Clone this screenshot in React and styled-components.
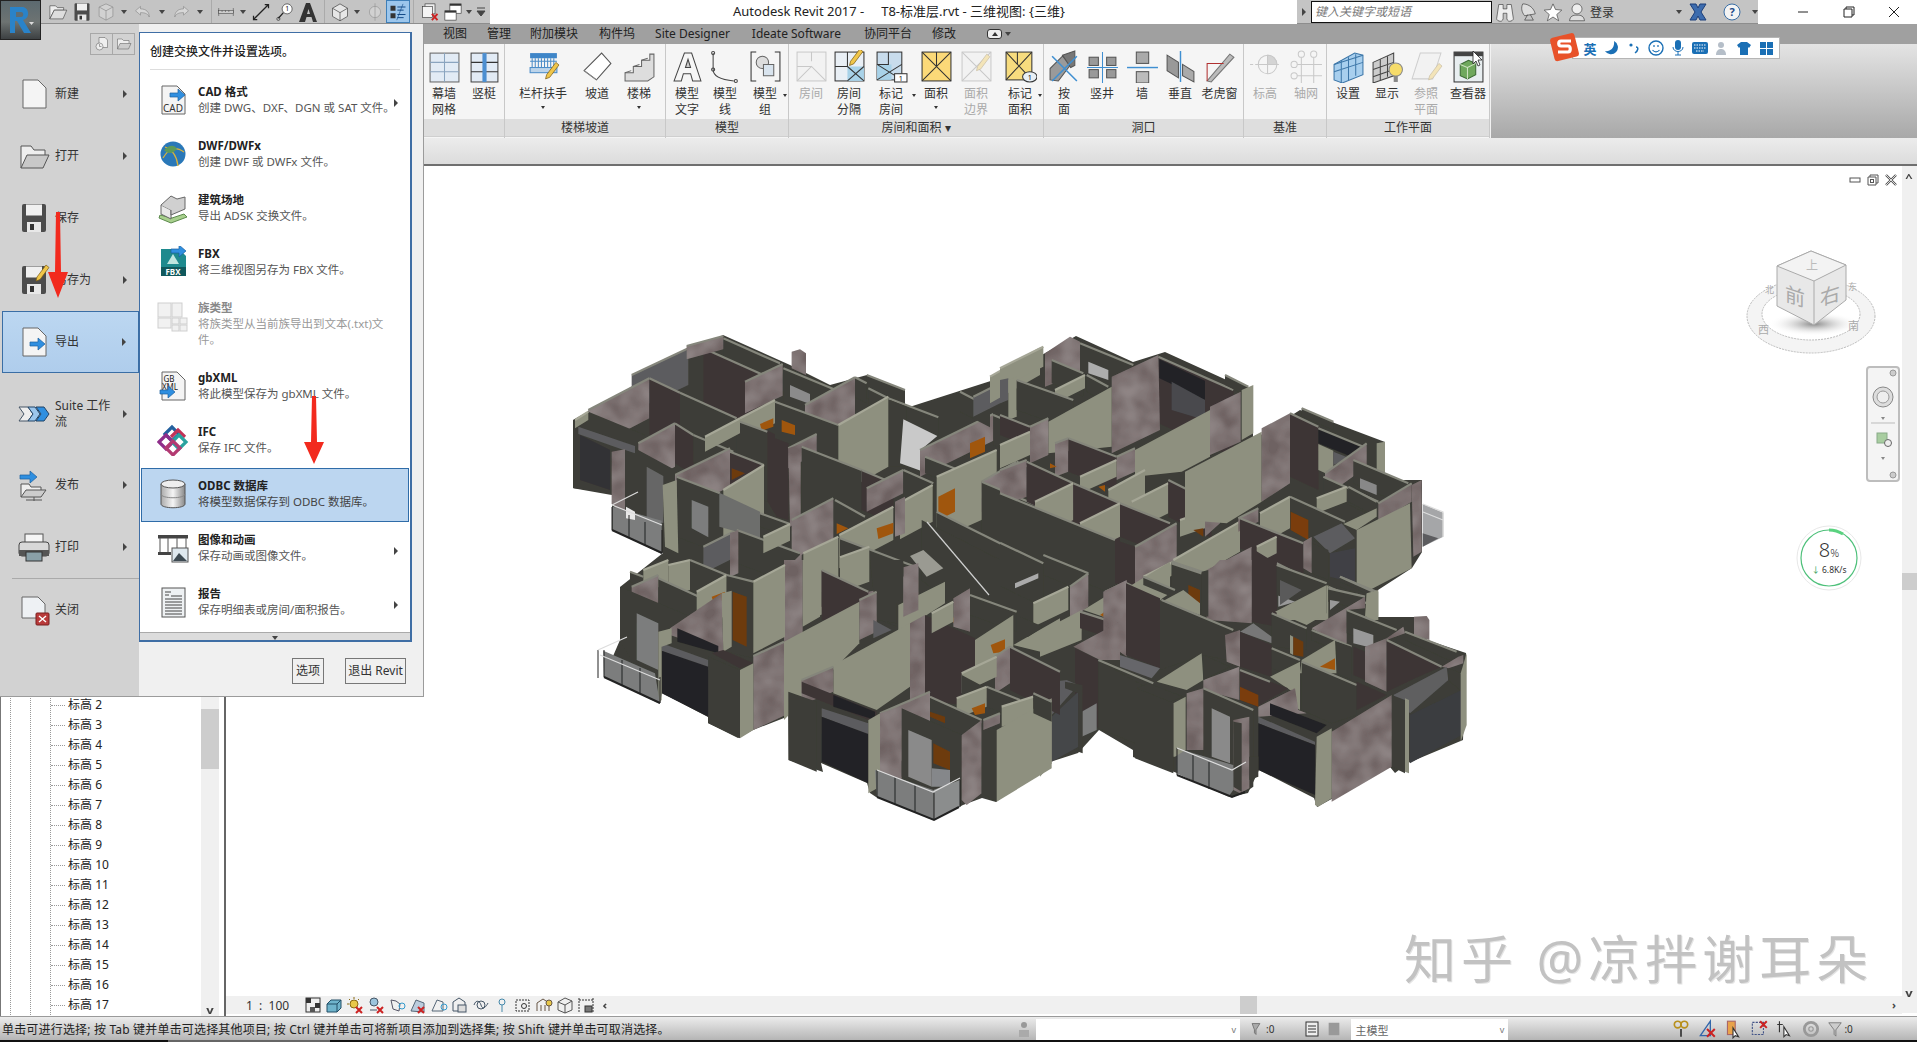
import React from 'react';
import styled, { createGlobalStyle } from 'styled-components';

const FONT = `"Noto Sans", "Noto Sans CJK SC", sans-serif`;

const Global = createGlobalStyle`
  html, body { margin: 0; padding: 0; background: #fff; }
  body { font-family: ${FONT}; font-size: 12px; color: #333; overflow: hidden; }
`;

const Page = styled.div`
  position: relative; width: 1917px; height: 1042px; overflow: hidden; background: #fff;
  display: flex; flex-direction: column;
`;
const TitleBar = styled.div`display: flex; height: 24px; flex: none; background: #fff; position: relative;`;
const RButton = styled.div`
  position: absolute; left: 0; top: 0; width: 41px; height: 40px; z-index: 30; box-sizing: border-box;
  border: 1px solid #222; background: linear-gradient(#5c6a70, #6d7372 55%, #3c4042);
  display: flex; align-items: center; justify-content: center;
`;
const Qat = styled.div`
  margin-left: 41px; width: 449px; height: 24px; background: #c4c4c4; box-sizing: border-box;
  border-bottom: 1px solid #8d8d8d; display: flex; align-items: center;
`;
const QatSlot = styled.div`
  flex: none; width: ${p => p.$w || 24}px; height: 23px; display: flex; align-items: center; justify-content: center;
  box-sizing: border-box; opacity: ${p => (p.$off ? 0.55 : 1)};
  ${p => p.$on && 'background:#9cc6ec;border:1px solid #3f7fb8;'}
`;
const QatSep = styled.div`flex: none; width: 1px; height: 23px; background: #aaa; margin: 0 ${p => p.$m ?? 5}px;`;
const TriDown = styled.span`
  flex: none; display: inline-block; width: 0; height: 0; border-left: 3px solid transparent; border-right: 3px solid transparent;
  border-top: 4px solid #444; margin: 0 ${p => p.$m ?? 3}px;
`;
const Title = styled.div`
  position: absolute; left: 733px; top: 0; height: 24px; line-height: 23px; white-space: pre; font-size: 13px; color: #222;
`;
const InfoCenter = styled.div`
  position: absolute; left: 1297px; top: 0; width: 461px; height: 24px; background: #c4c4c4; box-sizing: border-box;
  border-bottom: 1px solid #8d8d8d; display: flex; align-items: center;
`;
const PlayTri = styled.span`
  width: 0; height: 0; border-top: 4px solid transparent; border-bottom: 4px solid transparent; border-left: 4px solid #444; margin: 0 5px 0 5px;
`;
const SearchBox = styled.div`
  width: 181px; height: 22px; box-sizing: border-box; border: 1px solid #111; background: #fff; font-style: italic; color: #777;
  padding-left: 3px; line-height: 19px; flex: none; margin-right: 1px;
`;
const InfoSlot = styled.div`flex: none; width: ${p => p.$w || 24}px; display: flex; align-items: center; justify-content: center; color: #333;`;
const WinControls = styled.div`
  position: absolute; right: 0; top: 0; height: 24px; display: flex; width: 137px;
`;
const WinBtn = styled.div`flex: 1; display: flex; align-items: center; justify-content: center;`;

const Tabs = styled.div`
  height: 20px; flex: none; background: #a0a0a0; display: flex; align-items: center; padding-left: 443px; color: #222;
`;
const Tab = styled.div`margin-right: ${p => p.$mr}px; white-space: nowrap; flex: none; line-height: 20px;`;
const TabToggle = styled.div`
  width: 13px; height: 8px; border: 1px solid #333; border-radius: 3px; background: #eee; display: flex; align-items: center; justify-content: center;
`;
const TriUp = styled.span`width: 0; height: 0; border-left: 3px solid transparent; border-right: 3px solid transparent; border-bottom: 4px solid #333;`;

const Ribbon = styled.div`height: 94px; flex: none; display: flex; background: #f2f2f2;`;
const RibbonLead = styled.div`width: 424px; flex: none;`;
const RibbonFill = styled.div`flex: 1; background: linear-gradient(#e4e4e4, #a8a8a8); margin-left: 1px;`;
const Panel = styled.div`
  width: ${p => p.$w}px; flex: none; margin-right: 1px; display: flex; flex-direction: column; background: #f5f5f5;
  box-shadow: 1px 0 0 #c8c8c8;
`;
const PanelBody = styled.div`flex: 1; display: flex;`;
const PanelTitle = styled.div`
  height: 17px; flex: none; background: #dedede; text-align: center; line-height: 17px; color: #333; border-bottom: 1px solid #cfcfcf; margin-bottom: 1px;
`;
const RBtn = styled.div`
  width: ${p => p.$w}px; flex: none; position: relative; display: flex; flex-direction: column; align-items: center;
  color: ${p => (p.$off ? '#aaa' : '#333')};
`;
const RIcon = styled.div`
  height: 34px; margin: 5px 0 3px; display: flex; align-items: center; justify-content: center; opacity: ${p => (p.$off ? 0.35 : 1)};
`;
const RLabel = styled.div`line-height: 16px; font-size: 12px; white-space: nowrap; text-align: center;`;
const SideCaret = styled.span`
  position: absolute; right: 1px; top: 50px; width: 0; height: 0; border-left: 2.5px solid transparent; border-right: 2.5px solid transparent; border-top: 3px solid #333;
`;
const BelowCaret = styled.span`
  margin-top: 4px; width: 0; height: 0; border-left: 2.5px solid transparent; border-right: 2.5px solid transparent; border-top: 3px solid #333;
`;

const SubBar = styled.div`
  height: 28px; flex: none; box-sizing: border-box; background: linear-gradient(#ececec, #dcdcdc); border-bottom: 2px solid #6f6f6f;
`;

const Main = styled.div`flex: 1; display: flex; min-height: 0;`;
const Tree = styled.div`
  flex: none; box-sizing: border-box; display: flex; border-left: 1px solid #777; padding-left: 1px; padding-right: 5px;
  background: #fff; border-right: 2px solid #666; width: 226px;
`;
const TreeList = styled.div`
  flex: 1; display: flex; flex-direction: column; justify-content: flex-end; padding-bottom: 1px; overflow: hidden;
  background-image:
    repeating-linear-gradient(to bottom, #999 0 1px, transparent 1px 2px),
    repeating-linear-gradient(to bottom, #999 0 1px, transparent 1px 2px),
    repeating-linear-gradient(to bottom, #999 0 1px, transparent 1px 2px);
  background-size: 1px 100%; background-repeat: no-repeat; background-position: 8px 0, 28px 0, 48px 0;
`;
const TreeRow = styled.div`
  flex: none; height: 20px; line-height: 20px; padding-left: 66px; position: relative; color: #222; font-size: 12px;
  &::before { content: ''; position: absolute; left: 49px; width: 14px; top: 10px; border-top: 1px dotted #999; }
`;
const VScroll = styled.div`
  width: ${p => p.$w}px; flex: none; background: #f0f0f0; display: flex; flex-direction: column; align-items: center; justify-content: flex-end; position: relative;
`;
const TreeThumb = styled.div`position: absolute; left: 0; right: 0; bottom: 247px; height: 60px; background: #cdcdcd;`;
const SmallChevron = styled.div`color: #444; font-size: 10px; line-height: 12px; font-weight: 700; transform: scaleX(1.3); margin-left: ${p => p.$ml || 0}px;`;
const Canvas = styled.div`flex: 1; display: flex; min-width: 0;`;
const CanvasCol = styled.div`flex: 1; display: flex; flex-direction: column; min-width: 0;`;
const ViewArea = styled.div`flex: 1; position: relative; background: #fff;`;
const ViewBar = styled.div`
  height: 18px; margin-bottom: 2px; background: #f0f0f0; flex: none; display: flex; align-items: center; padding-left: 20px; position: relative;
`;
const ScaleText = styled.div`width: 58px; flex: none; white-space: pre; color: #333;`;
const ViewIcons = styled.div`display: flex; gap: 3px; align-items: center;`;
const HThumb = styled.div`position: absolute; left: 1014px; top: 0; width: 17px; height: 18px; background: #cdcdcd;`;
const HChevronEnd = styled.div`position: absolute; right: 6px; top: 2px; font-size: 11px; line-height: 14px; font-weight: 700; color: #444;`;
const RightScrollCol = styled.div`width: 15px; flex: none; background: #f0f0f0; position: relative; margin-bottom: 3px;`;
const RightThumb = styled.div`position: absolute; left: 0; right: 0; top: 407px; height: 17px; background: #cdcdcd;`;
const TopChevron = styled(SmallChevron)`position: absolute; top: 6px; left: 4px;`;
const BottomChevron = styled(SmallChevron)`position: absolute; bottom: 14px; left: 4px;`;

const Status = styled.div`
  height: 24px; flex: none; box-sizing: border-box; border-top: 1px solid #9a9a9a; background: linear-gradient(#ececec, #b5b5b5);
  display: flex; align-items: center; padding-left: 2px; color: #222;
`;
const Message = styled.div`width: 1013px; flex: none; white-space: nowrap; font-size: 12px; letter-spacing: .18px;`;
const StatusBox = styled.div`
  width: ${p => p.$w}px; height: 21px; flex: none; box-sizing: border-box; background: #fff; display: flex; align-items: center; justify-content: space-between;
  padding: 0 4px; color: #666; margin-top: 2px; font-size: 11px;
`;
const StatusIcons = styled.div`display: flex; align-items: center; gap: ${p => p.$g || 4}px; margin-left: ${p => p.$ml}px;`;
const VTick = styled.span`font-size: 9px; color: #777;`;
const StatusNum = styled.span`font-size: 10px; color: #333; margin-left: 1px;`;
const TaskStrip = styled.div`
  height: 2px; flex: none; background: linear-gradient(90deg, #111 0 168px, #666 168px 330px, #111 330px);
`;

/* ---------- overlays ---------- */
const Menu = styled.div`
  position: absolute; left: 0; top: 24px; width: 424px; height: 673px; z-index: 20; display: flex; box-sizing: border-box;
  background: #f0f0f0; border-right: 1px solid #9b9b9b; border-bottom: 1px solid #9b9b9b;
`;
const MenuLeft = styled.div`
  width: 139px; flex: none; background: #d2d2d2; position: relative; display: flex; flex-direction: column; padding-top: 39px;
`;
const RecentBtns = styled.div`position: absolute; top: 9px; left: 90px; display: flex;`;
const RecentBtn = styled.div`
  width: 23px; height: 22px; box-sizing: border-box; border: 1px solid #a8a8a8; margin-right: -1px; display: flex; align-items: center; justify-content: center;
`;
const MenuItem = styled.div`
  flex: none; height: ${p => p.$h || 62}px; display: flex; align-items: center; box-sizing: border-box; padding-left: 18px; position: relative; color: #333;
  ${p => p.$sel && 'background:linear-gradient(#bcd7f1,#afcdec);border:1px solid #3a6ea5;margin-left:2px;padding-left:15px;'}
`;
const MenuIcon = styled.div`width: 37px; flex: none; display: flex;`;
const MenuLabel = styled.div`width: 60px; line-height: 16px; font-size: 12px;`;
const MenuArrow = styled.span`
  position: absolute; left: ${p => p.$l ?? 123}px; top: 50%; margin-top: -4px; width: 0; height: 0;
  border-top: 4px solid transparent; border-bottom: 4px solid transparent; border-left: 4px solid #444;
`;
const MenuRule = styled.div`height: 1px; background: #aaa; margin: 0 0 0 12px;`;
const MenuRight = styled.div`flex: 1; display: flex; flex-direction: column; padding-top: 8px; min-width: 0;`;
const ExportPanel = styled.div`
  width: 273px; height: 610px; box-sizing: border-box; border: 1px solid #3f6ea5; border-width: 1px 2px 2px 1px; background: #fff;
  display: flex; flex-direction: column; flex: none; position: relative;
`;
const ExportHead = styled.div`
  height: 36px; flex: none; margin: 0 10px; line-height: 37px; font-weight: 500; color: #222; border-bottom: 1px solid #ddd; margin-bottom: 4px;
`;
const ExportRow = styled.div`
  height: ${p => p.$h || 54}px; flex: none; box-sizing: border-box; display: flex; padding: 10px 0 0 17px; position: relative;
  ${p => p.$sel && 'background:#bcd6f0;border:1px solid #2f6ca8;margin:0 1px;padding:9px 0 0 15px;'}
  color: ${p => (p.$off ? '#999' : '#555')};
`;
const ExportIcon = styled.div`width: 41px; flex: none; opacity: ${p => (p.$off ? 0.4 : 1)}; display: flex; align-items: flex-start;`;
const ExportText = styled.div`width: ${p => p.$w || 208}px; line-height: 16px; font-size: 11.5px; ${p => !p.$w && 'white-space:nowrap;'}`;
const ExportName = styled.div`font-weight: 700; color: ${p => (p.$off ? '#888' : '#222')}; font-size: 11.5px;`;
const ExportDesc = styled.div`${p => p.$dark && 'color:#444;'}`;
const ExportArrow = styled(MenuArrow)`left: 254px; margin-top: -2px;`;
const ScrollBand = styled.div`
  flex: 1; background: #dcdcdc; border-top: 1px solid #aaa; display: flex; justify-content: center; padding-top: 3px; box-sizing: border-box; margin-top: 2px;
`;
const MenuFooter = styled.div`flex: 1; display: flex; justify-content: flex-end; align-items: flex-start; padding: 16px 17px 0 0; gap: 21px;`;
const FootBtn = styled.div`
  height: 26px; width: ${p => p.$w}px; box-sizing: border-box; border: 1px solid #777; text-align: center; line-height: 24px; background: #f0f0f0; color: #333; white-space: nowrap;
`;
const Arrow = styled.svg`position: absolute; left: ${p => p.$x}px; top: ${p => p.$y}px; z-index: 25;`;
const Sogou = styled.div`
  position: absolute; left: 1572px; top: 37px; width: 208px; height: 22px; box-sizing: border-box; background: #fff; border: 1px solid #b5b5b5; z-index: 10;
  display: flex; align-items: center; padding-left: 6px; gap: 0;
`;
const SogouLogo = styled.svg`position: absolute; left: 1550px; top: 32px; z-index: 11;`;
const SogouSlot = styled.div`width: 22px; flex: none; display: flex; align-items: center; justify-content: center; color: #1a6fb5; font-weight: 700; font-size: 13px;`;
const Cursor = styled.svg`position: absolute; left: 1472px; top: 50px; z-index: 12;`;
const FloatSvg = styled.svg`position: absolute; left: ${p => p.$x}px; top: ${p => p.$y}px;`;
const NavBar = styled.div`
  position: absolute; left: 1640px; top: 200px; width: 34px; height: 116px; box-sizing: border-box; border: 2px solid #bdbdbd; border-radius: 4px; background: #f4f4f4;
`;
const SpeedBall = styled.div`position: absolute; left: 1570px; top: 359px; width: 66px; height: 66px;`;
const SpeedText = styled.div`
  position: absolute; inset: 0; display: flex; flex-direction: column; align-items: center; justify-content: center; color: #333;
`;
const SpeedNum = styled.div`font-size: 20px; line-height: 22px; font-weight: 300; margin-top: -3px; span { font-size: 11px; }`;
const SpeedRate = styled.div`font-size: 8.5px; line-height: 11px; white-space: nowrap; i { color: #2a9a55; font-style: normal; margin-right: 2px; }`;
const Watermark = styled.div`
  position: absolute; left: 1178px; top: 761px; font-size: 52px; line-height: 64px; color: #c2c2c2; white-space: pre; letter-spacing: 5px; font-weight: 400;
  text-shadow: 1px 1px 0 #e4e4e4;
`;
const WinSmall = styled.div`position: absolute; right: 5px; top: 8px; display: flex; gap: 6px; align-items: center;`;

/* ---------- icons ---------- */
const Ic = ({ w = 30, h = w, vb = '0 0 32 32', children }) => <svg width={w} height={h} viewBox={vb}>{children}</svg>;
const Arr = ({ x = 16, y = 14 }) => <path d={`M${x} ${y}h8v-4l7 6-7 6v-4h-8z`} fill="#2f8fe0" stroke="#1b5e9e" strokeWidth=".7" />;
const Doc = ({ f = '#f4f4f4' }) => <path d="M5 2h15l8 8v20H5z" fill={f} stroke="#666" />;
const Floppy = () => <g><rect x="4" y="2" width="24" height="28" rx="2" fill="#4c4c4c" /><rect x="8" y="2.5" width="16" height="11" fill="#f0f0f0" /><rect x="9" y="20" width="14" height="10" fill="#e8e8e8" /><rect x="12" y="22" width="4" height="6" fill="#333" /></g>;
const Pencil = ({ t = '' }) => <g transform={t}><path d="M20 20L29 8l3 2.5-9 12-4 1.5z" fill="#f0c64a" stroke="#7a5a14" strokeWidth=".7" /></g>;

const RI = {
  curtain: <g fill="none" stroke="#666"><rect x="2" y="3" width="28" height="28" fill="#e2ebf5" /><path d="M2 12h28M2 21h28M16 3v28" stroke="#8aa4bf" /></g>,
  mullion: <g><rect x="3" y="3" width="26" height="28" fill="#e2ebf5" stroke="#444" /><path d="M3 12h26M3 21h26" stroke="#333" /><rect x="14" y="3" width="4" height="28" fill="#4c8fd1" /></g>,
  railing: <g><rect x="3" y="3" width="26" height="5" fill="#3f86c8" /><path d="M3 11h26M5 8v9M8 8v9M11 8v9M14 8v9M17 8v9M20 8v9M23 8v9M26 8v9" stroke="#4a8cc8" fill="none" /><rect x="3" y="17" width="26" height="5" fill="#bcd4ea" stroke="#4a8cc8" /><Pencil t="translate(-1,4)" /></g>,
  ramp: <g><path d="M3 20L20 3l9 10-14 16z" fill="#fff" stroke="#555" /><path d="M3 20l12 9" stroke="#888" /></g>,
  stairs: <g fill="#ddd" stroke="#666"><path d="M2 30V22h8v-6h8v-6h8V4h4v22l-6 4z" /><path d="M2 22l6-2M10 16l6-2M18 10l6-2" /></g>,
  mtext: <g><path d="M3 30L13 3h7l9 27h-8l-2-7h-7l-2 7z" fill="#f6f6f6" stroke="#444" /><path d="M14 17h5l-2.5-8z" fill="#ccc" stroke="#444" /></g>,
  mline: <g fill="none" stroke="#444"><path d="M4 3v16c0 7 8 10 20 11" strokeWidth="1" /><circle cx="4" cy="3" r="1.5" /><circle cx="4" cy="19" r="1.5" /><circle cx="26" cy="30" r="1.5" /></g>,
  mgroup: <g fill="none" stroke="#333"><path d="M7 2H2v28h5M25 2h5v28h-5" /><circle cx="13" cy="12" r="6" fill="#ddd" stroke="#666" /><path d="M14 14h10v11H14z" fill="#d9e4ee" stroke="#666" /></g>,
  room: <g fill="none" stroke="#777"><rect x="2" y="2" width="28" height="28" fill="#eee" /><path d="M16 2v9M2 30L16 16l14 14M2 16h14" /></g>,
  sep: <g><rect x="2" y="2" width="28" height="28" fill="#e9eff5" stroke="#333" /><rect x="14" y="16" width="16" height="14" fill="#a8d2e8" /><path d="M14 2v14H2M14 16l16 14M30 16L14 30" stroke="#333" fill="none" /><Pencil t="translate(-3,-9)" /></g>,
  tag: <g><rect x="2" y="2" width="24" height="27" fill="#c8dcec" stroke="#333" /><rect x="2" y="14" width="14" height="15" fill="#a8d2e8" /><path d="M2 14l24 15M26 14L2 29M13 2v12H2" stroke="#333" fill="none" /><rect x="19" y="23" width="12" height="8" fill="#fff" stroke="#333" /><text x="25" y="30" fontSize="7" textAnchor="middle" fill="#111">1</text></g>,
  area: <g><rect x="2" y="2" width="28" height="28" fill="#fbd978" stroke="#333" /><path d="M2 2l28 28M30 2L2 30M16 2v14" stroke="#333" /></g>,
  abound: <g fill="none" stroke="#777"><rect x="2" y="2" width="28" height="28" fill="#eee" /><path d="M2 2l28 28M30 2L2 30" /><Pencil t="translate(-3,-4)" /></g>,
  tagarea: <g><rect x="2" y="2" width="25" height="27" fill="#f7dc7e" stroke="#333" /><path d="M2 2l25 27M27 2L2 29M13 2v12" stroke="#333" /><ellipse cx="25" cy="26" rx="7" ry="5" fill="#e8f0f6" stroke="#333" /><text x="25" y="29" fontSize="7" textAnchor="middle" fill="#111">1</text></g>,
  face: <g><path d="M2 29V18L14 6l8 8L10 30z" fill="#9a9a9a" stroke="#555" /><path d="M14 5l12-4v14l-4 2z" fill="#777" stroke="#555" /><path d="M4 6l24 24M28 6L4 30" stroke="#3f8fd1" strokeWidth="1.5" /></g>,
  shaft: <g><g fill="#999" stroke="#555"><rect x="3" y="7" width="9" height="8" /><rect x="20" y="7" width="9" height="8" /><rect x="3" y="19" width="9" height="8" /><rect x="20" y="19" width="9" height="8" /></g><path d="M16 2v30M1 17h30" stroke="#3f8fd1" /></g>,
  wall: <g><rect x="10" y="2" width="12" height="11" fill="#aaa" stroke="#555" /><rect x="10" y="21" width="12" height="11" fill="#bbb" stroke="#555" /><path d="M1 17h30" stroke="#3f8fd1" strokeWidth="1.4" /></g>,
  vert: <g><path d="M3 5l11 7v15L3 20z" fill="#999" stroke="#555" /><path d="M18 14l11 7v10l-11-6z" fill="#aaa" stroke="#555" /><path d="M16 1v30" stroke="#3f8fd1" strokeWidth="1.4" /></g>,
  dormer: <g><path d="M4 30L26 4l4 3L8 31z" fill="#bbb" stroke="#777" /><path d="M4 30V13h16" stroke="#b03030" fill="none" /></g>,
  level: <g fill="none" stroke="#777"><path d="M1 14h10M21 14h10" strokeDasharray="3 2" /><circle cx="18" cy="14" r="9" /><path d="M18 5v18M9 14h18" /><path d="M18 5a9 9 0 0 1 9 9h-9z" fill="#999" /></g>,
  grid: <g fill="none" stroke="#777"><circle cx="11" cy="4" r="3" /><circle cx="23" cy="4" r="3" /><circle cx="4" cy="14" r="3" /><circle cx="4" cy="25" r="3" /><path d="M11 7v25M23 7v25M7 14h24M7 25h24" /></g>,
  wpset: <g><path d="M2 14L22 3l8 2v19L10 32l-8-3z" fill="#a8cfee" stroke="#3c76a8" /><path d="M9 10v22M16 7v22M23 4v21M2 21l28-9M2 14l28-9" stroke="#3c76a8" fill="none" /></g>,
  wpshow: <g><path d="M2 12L22 3v22L2 32z" fill="#ccc" stroke="#444" /><path d="M9 9v20M16 6v20M2 19l20-7M2 26l20-7" stroke="#444" fill="none" /><circle cx="24" cy="19" r="6.5" fill="#f6dc6a" stroke="#888" /><rect x="22" y="25" width="4" height="6" fill="#888" /></g>,
  refplane: <g fill="#eee" stroke="#888"><path d="M2 28L10 3h20l-8 25z" /><Pencil t="translate(-1,5)" /></g>,
  viewer: <g><rect x="2" y="2" width="28" height="29" fill="#e8eef0" stroke="#333" /><rect x="2" y="2" width="28" height="4" fill="#444" /><path d="M8 14l8-4 7 3v11l-8 4-7-3z" fill="#6fa85c" stroke="#3c6a34" /><path d="M8 14l7 3v11M15 17l8-4" stroke="#cfe3c3" fill="none" /></g>,
};

const ribbon = [
  { w: 80, t: '', b: [['curtain', ['幕墙', '网格'], 40], ['mullion', ['竖梃'], 40]] },
  { w: 160, t: '楼梯坡道', b: [['railing', ['栏杆扶手'], 76, 0, 'b'], ['ramp', ['坡道'], 32], ['stairs', ['楼梯'], 52, 0, 'b']] },
  { w: 122, t: '模型', b: [['mtext', ['模型', '文字'], 42], ['mline', ['模型', '线'], 34], ['mgroup', ['模型', '组'], 46, 0, 's']] },
  { w: 254, t: '房间和面积 ▾', b: [['room', ['房间'], 44, 1], ['sep', ['房间', '分隔'], 32], ['tag', ['标记', '房间'], 52, 0, 's'], ['area', ['面积'], 38, 0, 'b'], ['abound', ['面积', '边界'], 42, 1], ['tagarea', ['标记', '面积'], 46, 0, 's']] },
  { w: 199, t: '洞口', b: [['face', ['按', '面'], 40], ['shaft', ['竖井'], 36], ['wall', ['墙'], 44], ['vert', ['垂直'], 32], ['dormer', ['老虎窗'], 47]] },
  { w: 82, t: '基准', b: [['level', ['标高'], 42, 1], ['grid', ['轴网'], 40, 1]] },
  { w: 162, t: '工作平面', b: [['wpset', ['设置'], 42], ['wpshow', ['显示'], 36], ['refplane', ['参照', '平面'], 42, 1], ['viewer', ['查看器'], 42]] },
];

const Q = ({ w = 20, children }) => <Ic w={w}>{children}</Ic>;
const Folder = ({ s = 20 }) => <Ic w={s}><path d="M3 27V6h9l3 3h10v4H10L3 27z" fill="#eee" stroke="#444" /><path d="M3 27l7-14h20l-6 14z" fill="#ddd" stroke="#444" /></Ic>;

const menuItems = [
  ['新建', <Ic w={32}><Doc /></Ic>, true],
  ['打开', <Ic w={32}><path d="M3 28V6h10l3 4h11v5" fill="#eee" stroke="#555" /><path d="M3 28l6-13h22l-6 13z" fill="#c8c8c8" stroke="#555" /></Ic>, true],
  ['保存', <Ic w={32}><Floppy /></Ic>, false],
  ['另存为', <Ic w={32}><Floppy /><Pencil t="translate(-1,-7)" /></Ic>, true],
];
const menuItems2 = [
  ['发布', <Ic w={32}><path d="M3 28V15h8l2 3h10v3" fill="#eee" stroke="#555" /><path d="M3 28l5-7h20l-5 7z" fill="#ccc" stroke="#555" /><path d="M8 31h16M16 28v4" stroke="#555" /><path d="M2 6h10V2l7 6-7 6v-4H2z" fill="#2f8fe0" stroke="#1b5e9e" strokeWidth=".7" /></Ic>],
  ['打印', <Ic w={32}><rect x="7" y="3" width="18" height="11" fill="#f5f5f5" stroke="#555" /><rect x="1" y="11" width="30" height="14" rx="3" fill="#d8d8d8" stroke="#444" /><rect x="1" y="19" width="30" height="6" fill="#555" /><rect x="8" y="21" width="16" height="9" fill="#8aa0a8" stroke="#333" /></Ic>],
];

const exportsA = [
  ['CAD 格式', '创建 DWG、DXF、DGN 或 SAT 文件。', <Ic w={32}><Doc /><text x="16" y="28" fontSize="10" textAnchor="middle" fill="#333" fontFamily="Noto Sans">CAD</text><Arr x={13} y={9} /></Ic>, true],
  ['DWF/DWFx', '创建 DWF 或 DWFx 文件。', <Ic w={32}><circle cx="16" cy="16" r="12.5" fill="#2a78b8" /><path d="M6 20c6-10 12-12 21-6M8 9c8 3 12 10 13 19" stroke="#d8b23c" strokeWidth="1.3" fill="none" /><path d="M7 12c5-5 10-6 13-1-3 4-9 6-13 1z" fill="#5c9a5a" /></Ic>],
  ['建筑场地', '导出 ADSK 交换文件。', <Ic w={32}><path d="M2 26l12 5 16-6-3-3-12 4-12-3z" fill="#a8d08d" stroke="#5c8a4c" /><path d="M4 13l10 5v9L4 22z" fill="#e8e8e8" stroke="#666" /><path d="M4 13L14 4l6 3 8-2v12l-14 6v-5" fill="#d0d0d0" stroke="#666" /></Ic>],
  ['FBX', '将三维视图另存为 FBX 文件。', <Ic w={32}><path d="M4 3h18l7 7v20H4z" fill="#1e8a8e" /><rect x="4" y="21" width="25" height="9" fill="#10585c" /><text x="16" y="29" fontSize="8" textAnchor="middle" fill="#fff" fontWeight="700" fontFamily="Noto Sans">FBX</text><path d="M10 18l6-10 6 10z" fill="#bfe6e0" /><Arr x={14} y={3} /></Ic>],
];

const exportsB = [
  ['gbXML', '将此模型保存为 gbXML 文件。', <Ic w={32}><Doc /><text x="12" y="12" fontSize="8" textAnchor="middle" fill="#222" fontFamily="Noto Sans">GB</text><text x="13" y="20" fontSize="8" textAnchor="middle" fill="#222" fontFamily="Noto Sans">XML</text><Arr x={3} y={20} /></Ic>],
  ['IFC', '保存 IFC 文件。', <Ic w={32}><g fill="none" strokeWidth="3.2"><path d="M8 10l7-7 7 7-7 7z" stroke="#23609e" /><path d="M17 10l7-7 7 7" stroke="#c23258" transform="translate(-3,3)" /><path d="M2 18l7-7 7 7-7 7z" stroke="#8e2d8a" /><path d="M15 18l7-7 7 7-7 7z" stroke="#2aa3a0" /><path d="M9 24l7-7 7 7-7 7z" stroke="#b33a72" /></g></Ic>],
];
const exportsC = [
  ['图像和动画', '保存动画或图像文件。', <Ic w={32}><rect x="1" y="3" width="30" height="3.5" fill="#444" /><rect x="1" y="20" width="13" height="3" fill="#444" /><path d="M3 6v14M11 6v14M20 6v10M29 6v10" stroke="#555" /><rect x="15" y="16" width="16" height="14" fill="#dfe8ee" stroke="#555" /><path d="M16 29l6-8 8 8z" fill="#3e4a52" /></Ic>, true],
  ['报告', '保存明细表或房间/面积报告。', <Ic w={32}><rect x="5" y="2" width="23" height="29" fill="#eef1f3" stroke="#555" /><path d="M8 6h6M8 9h4M8 13h17M8 16h17M8 19h17M8 22h17M8 25h17M8 28h17M14 10h11" stroke="#444" /></Ic>, true],
];

const ViewMini = ({ c }) => <Ic w={18} vb="0 0 18 18">{c}</Ic>;
const viewIcons = [
  <g><rect x="2" y="2" width="14" height="14" fill="#eee" stroke="#333" /><rect x="2" y="2" width="5" height="5" fill="#333" /><rect x="11" y="7" width="5" height="5" fill="#333" /><rect x="6" y="11" width="5" height="5" fill="#555" /></g>,
  <g><path d="M2 8l4-4h10v8l-4 4H2z" fill="#6fb4cc" stroke="#234e66" /><path d="M2 8h10v8M12 8l4-4" stroke="#234e66" fill="none" /></g>,
  <g><circle cx="8" cy="8" r="4" fill="#e8c84a" stroke="#8a6a14" /><path d="M8 1v2M1 8h2M3 3l1 1M13 3l-1 1" stroke="#8a6a14" /><path d="M10 11l6 6M16 11l-6 6" stroke="#c22" strokeWidth="2" /></g>,
  <g><circle cx="7" cy="6" r="4" fill="#9cc4dc" stroke="#456" /><path d="M3 14h7" stroke="#456" /><path d="M10 11l6 6M16 11l-6 6" stroke="#c22" strokeWidth="2" /></g>,
  <g fill="none" stroke="#556"><path d="M3 4l5 1 4 3-1 7-6-2z" /><circle cx="14" cy="10" r="3" stroke="#39c" /></g>,
  <g fill="none" stroke="#567"><path d="M2 15L7 4l8 3v9z" fill="#bcd" /><path d="M9 11l6 6M15 11l-6 6" stroke="#c22" strokeWidth="2" /></g>,
  <g fill="none" stroke="#567"><path d="M2 15L7 4l6 2v9z" /><circle cx="14" cy="11" r="3" stroke="#39c" /></g>,
  <g fill="none" stroke="#456"><path d="M2 6l6-4 6 4v9H2z" /><rect x="7" y="9" width="8" height="7" fill="#ddd" /></g>,
  <g fill="none" stroke="#456"><path d="M2 9c2-6 6-4 7 0s4 4 7-2" /><circle cx="9" cy="9" r="4" /></g>,
  <g fill="none" stroke="#48a"><circle cx="9" cy="6" r="3" /><path d="M9 9v7" /></g>,
  <g fill="none" stroke="#333"><rect x="2" y="4" width="13" height="11" strokeDasharray="2 1" /><circle cx="10" cy="10" r="2.5" /></g>,
  <g fill="none" stroke="#654"><path d="M2 15V7l6-4 6 4v8M6 15V9M10 15V9" /><circle cx="14" cy="7" r="3" fill="#e8c84a" /></g>,
  <g fill="none" stroke="#555"><path d="M2 6l7-4 7 3v9l-7 3-7-3zM2 6l7 3 7-4M9 9v8" /></g>,
  <g fill="none" stroke="#333"><path d="M2 2v14M2 4h14M16 2v14" strokeDasharray="2 1" /><rect x="8" y="10" width="7" height="6" fill="#777" /></g>,
];
const statusIcons = [
  <g fill="none" stroke="#b8901c" strokeWidth="1.5"><circle cx="6" cy="5" r="3" /><circle cx="12" cy="5" r="3" /><path d="M9 9v7" stroke="#333" /></g>,
  <g fill="none" stroke="#36a" strokeWidth="1.2"><path d="M3 15L12 2v13z" /><path d="M9 9l7 7M16 9l-7 7" stroke="#c22" strokeWidth="1.8" /></g>,
  <g fill="#e8a24a" stroke="#a66"><rect x="4" y="2" width="7" height="12" /><path d="M9 8l5 8-3-1-2 2z" fill="#fff" stroke="#333" /></g>,
  <g fill="none" stroke="#458"><rect x="3" y="3" width="10" height="11" strokeDasharray="2 1" /><path d="M10 2l6 6M16 2l-6 6" stroke="#c22" strokeWidth="1.8" /></g>,
  <g fill="none" stroke="#333"><path d="M4 2v10M2 5h5M8 7l5 8-3-1-2 2z" fill="#fff" /></g>,
  <g fill="none" stroke="#999"><circle cx="9" cy="9" r="6" strokeWidth="2.5" /><circle cx="9" cy="9" r="2" /></g>,
];

/* ---------- building: traced outlines, listed back to front ---------- */
const S = '#8e907f', M = '#6e6262', D = '#3c3d37', K = '#3d3536', G = '#5c5c5e', B = '#242426', O = '#a0560f', OD = '#6d3a10', W = '#c9c9c9', GL = '#7b7d7d';
const capOf = c => (c === S ? '#a6a797' : '#85867b');
const w = (c, a, b, d, e, h = 210) => ({ c, pts: [a, b, d, e, d, e + h, a, b + h], cap: [a, b, d, e] });
const p = (c, ...pts) => ({ c, pts });
const mapLayer = (ox, oy, sx, sy, list) => list.map(it => ({
  c: it.c,
  pts: it.pts.map((v, i) => (i % 2 === 0 ? ox + v / sx : oy + v / sy)),
  cap: it.cap && it.cap.map((v, i) => (i % 2 === 0 ? ox + v / sx : oy + v / sy)),
}));

const silhouette = p(D,
  573, 420, 723, 335, 790, 365, 830, 385, 867, 375, 903, 392, 900, 410, 1000, 378, 1076, 336, 1133, 362, 1165, 352, 1253, 392,
  1253, 440, 1300, 410, 1385, 442, 1385, 480, 1422, 480, 1422, 552, 1412, 568, 1378, 590, 1378, 617, 1427, 617, 1427, 640, 1466, 653,
  1463, 740, 1408, 763, 1395, 773, 1390, 767, 1317, 807, 1314, 798, 1259, 770, 1248, 793, 1230, 797, 1177, 773, 1133, 757, 1133, 750,
  1099, 730, 1078, 753, 1050, 762, 996, 802, 982, 798, 963, 805, 934, 820, 876, 797, 870, 793, 867, 783, 821, 763, 823, 772, 789, 760,
  788, 692, 784, 718, 753, 730, 738, 738, 708, 723, 708, 717, 662, 693, 660, 703, 604, 677, 620, 640, 620, 587, 663, 553, 612, 530, 612, 493, 573, 488,
);

const z7 = mapLayer(560, 320, 3, 3, [
  p(M, 695, 95, 720, 88, 738, 100, 738, 165, 695, 145),
  w(D, 490, 55, 660, 130, 70),
  w(G, 215, 165, 385, 85, 110),
  w(K, 430, 85, 610, 165, 210),
  w(M, 380, 78, 490, 48, 40),
  w(M, 555, 185, 668, 132, 95),
  w(D, 670, 145, 840, 215, 150),
  p('#8b8b8b', 690, 195, 750, 222, 750, 252, 690, 230),
  w(D, 920, 165, 1035, 210, 70),
  w(M, 735, 255, 885, 172, 115),
  w(D, 885, 172, 920, 190, 60),
  w(D, 925, 205, 985, 235, 50),
  w(M, 85, 270, 268, 175, 120),
  w(K, 268, 175, 360, 218, 170),
  w(D, 360, 218, 530, 295, 130),
  p(D, 40, 300, 85, 275, 255, 345, 225, 385, 225, 480, 155, 525, 40, 505),
  p(G, 55, 320, 225, 378, 225, 402, 55, 342),
  p('#333034', 60, 345, 150, 390, 150, 510, 60, 480),
  w(S, 45, 300, 85, 275, 25),
  p(M, 155, 395, 195, 388, 195, 600, 155, 550),
  p(D, 195, 390, 225, 400, 225, 590, 195, 600),
  w(M, 235, 370, 345, 310, 130),
  w(K, 345, 310, 400, 345, 120),
  w(D, 400, 345, 520, 395, 80),
  w(S, 435, 350, 540, 295, 45),
  w(S, 540, 295, 645, 240, 70),
  p(O, 600, 312, 640, 295, 640, 320, 605, 332),
  p(K, 620, 330, 685, 362, 685, 600, 650, 590, 620, 540),
  w(D, 540, 305, 622, 335, 210),
  w(D, 645, 245, 835, 315, 110),
  p(O, 665, 300, 705, 316, 705, 345, 665, 335),
  w(M, 345, 465, 510, 385, 115),
  w(K, 510, 395, 612, 435, 130),
  p(OD, 515, 445, 555, 460, 515, 480),
  w(S, 490, 510, 612, 435, 150),
  w(D, 985, 235, 1135, 292, 60),
  p(D, 990, 240, 1040, 260, 1040, 440, 990, 440),
  p(W, 1030, 298, 1132, 348, 1082, 390, 1082, 452, 1020, 430),
  w(S, 835, 315, 985, 230, 210),
  w(M, 685, 385, 770, 342, 60),
  p(M, 685, 385, 722, 372, 722, 600, 690, 620),
  w(D, 725, 380, 905, 450, 215),
  w(K, 905, 450, 1000, 490, 120),
  w(D, 350, 470, 480, 520, 180),
  p(GL, 395, 540, 445, 560, 445, 652, 395, 625),
  p('#6d6e6c', 478, 518, 600, 575, 600, 655, 478, 620),
  w(D, 600, 580, 690, 612, 40),
  p(D, 225, 385, 345, 450, 345, 650, 305, 690, 225, 640),
  p('#666', 260, 440, 310, 468, 310, 610, 260, 590),
  p(S, 308, 495, 350, 480, 355, 700, 315, 680),
  p(GL, 158, 630, 305, 702, 305, 602, 158, 560),
  p('#e8e8e8', 198, 560, 225, 575, 225, 600, 198, 595),
  w(M, 1080, 390, 1300, 282, 80),
  p(O, 1230, 370, 1275, 350, 1275, 395, 1230, 415),
  w(D, 1200, 215, 1290, 262, 60),
  w(G, 1240, 230, 1340, 180, 60),
  w(S, 1290, 170, 1440, 85, 80),
  w(D, 1300, 285, 1405, 328, 90),
  w(D, 1095, 410, 1190, 448, 50),
  w(M, 920, 505, 1030, 450, 70),
  w(D, 1030, 450, 1120, 490, 100),
  w(S, 1130, 470, 1310, 390, 190),
  p(O, 1135, 530, 1185, 505, 1185, 575, 1135, 600),
  w(S, 1020, 548, 1118, 495, 110),
  p(M, 1005, 545, 1035, 530, 1035, 640, 1005, 650),
  w(M, 1265, 485, 1370, 425, 90),
  w(D, 1370, 425, 1440, 455, 110),
  w(D, 1265, 485, 1440, 560, 210),
  w(M, 695, 600, 820, 535, 120),
  w(D, 825, 540, 915, 590, 100),
  p(O, 830, 610, 865, 625, 830, 642),
  w(S, 838, 645, 1000, 560, 100),
  p(O, 950, 625, 1000, 608, 1000, 640, 955, 657),
  w(D, 1130, 575, 1440, 730, 150),
  p(D, 1085, 600, 1440, 780, 1440, 900, 1230, 900, 1085, 780),
  p('#9a9a92', 1050, 708, 1090, 690, 1150, 745, 1100, 770),
  w(D, 530, 630, 720, 700, 100),
  w(G, 430, 680, 520, 635, 80),
  p(M, 510, 640, 535, 630, 535, 760, 510, 770),
  w(S, 610, 650, 690, 612, 50),
  p(M, 675, 750, 725, 700, 725, 900, 675, 900),
  w(S, 730, 700, 835, 650, 210),
  w(D, 840, 655, 1060, 738, 200),
  w(S, 840, 712, 928, 680, 105),
  p(M, 1030, 742, 1075, 730, 1075, 850, 1030, 850),
  p(K, 785, 752, 930, 815, 930, 900, 785, 900),
  p(M, 895, 822, 950, 810, 950, 900, 895, 900),
]);

const z10 = mapLayer(1000, 320, 3, 3, [
  w(S, 0, 145, 130, 80, 60),
  p(M, 135, 100, 210, 50, 240, 65, 240, 160, 135, 200),
  w(D, 240, 70, 400, 135, 100),
  p('#adadad', 265, 125, 325, 150, 325, 180, 265, 160),
  w(D, 155, 120, 250, 160, 70),
  w(S, 165, 210, 255, 165, 40),
  w(D, 260, 165, 325, 200, 50),
  p(G, 0, 180, 25, 175, 25, 240, 0, 250),
  p(S, 25, 180, 50, 170, 50, 290, 25, 300),
  w(D, 50, 180, 220, 240, 90),
  w(K, 475, 110, 700, 210, 200),
  p(B, 478, 118, 615, 182, 615, 240, 478, 175),
  p('#48494d', 515, 185, 615, 240, 615, 300, 515, 270),
  w(D, 675, 165, 745, 200, 30),
  p(S, 725, 210, 760, 195, 760, 340, 725, 360),
  p(M, 335, 170, 475, 105, 480, 330, 335, 400),
  p(M, 630, 260, 722, 215, 722, 365, 630, 405),
  p(S, 405, 390, 630, 270, 630, 410, 545, 455, 405, 470),
  p(S, 145, 305, 335, 200, 335, 380, 145, 400),
  w(K, 0, 285, 90, 320, 60),
  w(S, 0, 375, 90, 335, 70),
  w(M, 90, 320, 145, 295, 110),
  w(M, 165, 370, 205, 355, 100),
  w(K, 205, 355, 350, 410, 100),
  p(O, 150, 430, 170, 440, 150, 445),
  w(S, 240, 470, 350, 420, 50),
  p(O, 295, 500, 315, 495, 315, 515),
  w(M, 350, 410, 405, 385, 70),
  w(S, 325, 510, 435, 450, 90),
  w(S, 395, 545, 505, 490, 90),
  w(M, 0, 450, 80, 420, 110),
  w(K, 80, 425, 220, 490, 120),
  w(S, 105, 545, 220, 490, 110),
  w(K, 220, 490, 360, 550, 120),
  w(S, 240, 610, 360, 550, 100),
  w(K, 360, 550, 510, 610, 100),
  w(K, 505, 480, 635, 545, 110),
  p(M, 615, 550, 660, 535, 660, 610, 615, 650),
  w(S, 540, 600, 615, 575, 50),
  p(OD, 580, 630, 610, 625, 610, 650),
  p(S, 555, 455, 785, 335, 785, 545, 680, 610, 555, 600),
  p(M, 785, 325, 870, 280, 870, 490, 785, 545),
  w(D, 905, 265, 1000, 305, 25),
  w(K, 870, 280, 955, 320, 190),
  w(B, 955, 325, 1090, 380, 45),
  p(S, 955, 372, 1000, 392, 1000, 470, 955, 450),
  p(G, 1000, 395, 1050, 415, 1000, 435),
  p(S, 1130, 370, 1155, 365, 1155, 470, 1130, 480),
  w(M, 975, 460, 1100, 370, 70),
  w(D, 1060, 420, 1225, 490, 70),
  p('#888', 1080, 475, 1130, 495, 1130, 525, 1080, 505),
  w(D, 970, 470, 1135, 545, 50),
  w(S, 950, 535, 1040, 500, 45),
  w(D, 1045, 500, 1130, 545, 45),
  w(S, 780, 580, 870, 530, 95),
  w(D, 870, 530, 1035, 605, 100),
  p('#7a3d08', 872, 575, 925, 600, 925, 660, 872, 630),
  w(M, 1135, 550, 1235, 490, 55),
  p(M, 1235, 495, 1265, 480, 1265, 695, 1240, 710),
  p('#a5a6a8', 1268, 552, 1330, 578, 1330, 650, 1268, 680),
  p(G, 1268, 640, 1315, 655, 1268, 680),
  p(S, 1030, 612, 1130, 565, 1130, 590, 1070, 630),
  p(S, 1070, 630, 1230, 550, 1235, 745, 1070, 830),
  p(G, 940, 650, 1025, 610, 1065, 655, 990, 700),
  p('#404145', 990, 700, 1065, 685, 1065, 790, 990, 770),
  p(D, 935, 670, 985, 690, 985, 780, 935, 760),
  w(D, 0, 520, 345, 660, 165),
  p(K, 345, 660, 405, 680, 405, 800, 345, 790),
  w(M, 405, 680, 530, 610, 120),
  w(S, 520, 720, 720, 605, 90),
  w(M, 715, 595, 775, 565, 40),
  w(K, 720, 595, 910, 670, 90),
  w(S, 770, 680, 830, 650, 50),
  p(M, 910, 665, 935, 650, 935, 760, 910, 745),
  w(D, 130, 705, 265, 760, 60),
  w(D, 0, 668, 130, 730, 130),
  p('#aaa', 45, 790, 115, 760, 115, 775, 45, 805),
  w(M, 210, 800, 265, 760, 100),
  w(S, 100, 850, 205, 800, 70),
  w(M, 315, 815, 380, 785, 100),
  w(K, 380, 790, 480, 840, 110),
  w(S, 430, 770, 520, 725, 40),
  w(D, 430, 770, 525, 815, 40),
  w(D, 480, 840, 620, 900, 60),
  w(D, 515, 725, 620, 760, 130),
  p(OD, 560, 785, 600, 800, 600, 880, 560, 870),
  p(M, 620, 750, 755, 680, 755, 900, 620, 900),
  p(K, 755, 685, 830, 730, 830, 900, 755, 900),
  w(D, 830, 730, 970, 800, 70),
  p('#999', 835, 780, 905, 810, 905, 840, 835, 860),
  w(D, 985, 800, 1100, 850, 50),
  w(D, 1020, 770, 1130, 815, 30),
  p(S, 1100, 815, 1135, 815, 1135, 900, 1100, 900),
  p(S, 820, 880, 985, 795, 985, 900, 850, 900),
]);

const z12 = mapLayer(1040, 560, 3, 3, [
  p(K, 635, 0, 710, 0, 710, 200, 635, 185),
  p(M, 505, 35, 540, 0, 635, 0, 635, 190, 505, 180),
  p(S, 275, 75, 390, 5, 390, 100, 360, 120, 275, 100),
  w(D, 395, 10, 485, 40, 110),
  p(OD, 445, 75, 480, 90, 480, 160, 445, 145),
  p(D, 485, 35, 505, 30, 505, 170, 485, 165),
  w(D, 310, 50, 405, 90, 25),
  p(S, 365, 125, 430, 90, 480, 130, 480, 165),
  p(S, 0, 215, 125, 150, 125, 240, 0, 290),
  p(S, 130, 150, 195, 110, 195, 130, 190, 170),
  w(K, 120, 155, 215, 185, 50),
  p(O, 180, 165, 195, 155, 200, 175),
  p(M, 190, 95, 260, 60, 260, 290, 190, 240),
  p(M, 100, 260, 240, 185, 240, 300, 180, 300),
  p(K, 258, 70, 360, 115, 360, 325, 258, 285),
  p(D, 360, 120, 580, 210, 560, 225, 560, 300, 490, 285, 360, 330),
  { c: D, pts: [365, 120, 580, 210, 580, 212, 365, 122], cap: [365, 120, 580, 210] },
  p('#66666a', 240, 285, 360, 325, 335, 355, 240, 320),
  p(M, 555, 225, 600, 210, 600, 320, 560, 305),
  p('#777', 600, 215, 640, 190, 695, 230, 695, 250),
  p(K, 600, 215, 695, 255, 695, 350, 600, 320),
  w(D, 710, 15, 860, 70, 90),
  p('#5a5a5a', 720, 60, 785, 90, 720, 135),
  p(S, 705, 155, 860, 75, 860, 160, 800, 195),
  { c: D, pts: [695, 160, 800, 205, 800, 270, 695, 260], cap: [695, 160, 800, 205] },
  p(S, 750, 225, 760, 230, 760, 285, 750, 280),
  p(OD, 760, 230, 790, 245, 790, 290, 760, 285),
  w(D, 900, 50, 1000, 95, 15),
  w(D, 865, 85, 975, 110, 40),
  p('#999', 870, 120, 900, 125, 870, 150),
  p(S, 980, 100, 1015, 90, 1015, 170, 975, 170),
  p(M, 815, 205, 975, 110, 975, 145, 920, 150, 920, 250, 885, 245),
  w(D, 920, 150, 1070, 210, 70),
  p('#999', 940, 205, 1000, 225, 1000, 265, 940, 250),
  w(D, 815, 210, 935, 260, 30),
  p(S, 785, 300, 885, 240, 890, 340, 780, 340),
  p(O, 840, 320, 885, 295, 885, 330, 860, 325),
  w(D, 695, 265, 780, 300, 60),
  p(D, 890, 245, 935, 260, 935, 360, 890, 340),
  p(K, 940, 260, 975, 275, 975, 360, 940, 345),
  p(M, 975, 260, 1040, 235, 1090, 200, 1095, 220, 1040, 240, 1040, 395, 975, 365),
  p(M, 1122, 170, 1160, 168, 1168, 180, 1168, 240, 1122, 225),
  { c: D, pts: [1095, 215, 1250, 275, 1225, 300, 1095, 240], cap: [1095, 215, 1250, 275] },
  { c: K, pts: [1040, 240, 1205, 320, 1125, 355, 1040, 395], cap: [1040, 240, 1205, 320] },
  p(M, 1205, 320, 1255, 290, 1270, 285, 1270, 310, 1225, 325),
  p('#5e5e60', 1060, 405, 1220, 320, 1225, 360, 1110, 460),
  p(D, 1225, 325, 1265, 340, 1265, 395, 1225, 360),
  p('#3b3c41', 1110, 465, 1265, 390, 1265, 525, 1110, 610),
  p(S, 1262, 340, 1280, 280, 1280, 495, 1262, 545),
  p(S, 1095, 415, 1107, 420, 1107, 640, 1095, 635),
  p(D, 1055, 405, 1095, 420, 1095, 640, 1055, 620),
  p(M, 875, 515, 1055, 405, 1055, 620, 875, 725),
  p(S, 690, 350, 780, 305, 780, 400, 750, 390),
  { c: D, pts: [785, 305, 950, 375, 950, 465, 875, 490, 785, 450], cap: [785, 305, 950, 375] },
  p(K, 950, 365, 1040, 405, 950, 450),
  p(S, 755, 390, 780, 375, 780, 450, 755, 435),
  p(M, 655, 440, 765, 385, 775, 450, 800, 460, 655, 470),
  p(B, 690, 430, 860, 495, 830, 520, 690, 465),
  p(G, 655, 470, 825, 545, 825, 555, 655, 490),
  p(B, 655, 490, 825, 555, 825, 705, 655, 630),
  p(S, 830, 530, 875, 505, 875, 715, 835, 740, 825, 735),
  { c: K, pts: [600, 330, 690, 365, 745, 385, 650, 440, 600, 420], cap: [600, 330, 690, 365] },
  p('#7a3d08', 600, 380, 655, 405, 655, 440, 600, 420),
  p(M, 490, 360, 598, 320, 598, 420, 490, 390),
  { c: D, pts: [490, 385, 640, 450, 640, 680, 610, 700, 490, 590], cap: [490, 385, 640, 450] },
  p('#8a8a8a', 515, 445, 570, 470, 570, 610, 515, 590),
  p(M, 580, 480, 628, 470, 628, 685, 600, 700, 580, 690),
  p(D, 580, 485, 605, 490, 605, 695, 580, 680),
  p(GL, 410, 565, 580, 615, 580, 690, 565, 710, 410, 640),
  p(D, 628, 590, 655, 590, 655, 650, 628, 660),
  p(S, 350, 365, 485, 280, 490, 360, 440, 390),
  p(D, 490, 285, 570, 320, 490, 360),
  p(M, 440, 400, 490, 385, 490, 570, 440, 570),
  p(S, 400, 430, 437, 410, 437, 570, 405, 590, 400, 590),
  p(K, 105, 265, 175, 300, 175, 505, 105, 440),
  { c: D, pts: [175, 300, 400, 430, 400, 640, 285, 595, 285, 550, 175, 505], cap: [175, 300, 340, 370] },
  p(D, 325, 370, 430, 410, 390, 425, 290, 385),
  p(GL, 125, 455, 170, 430, 170, 510, 125, 530),
  p(G, 0, 370, 80, 360, 115, 375, 35, 465),
  p('#45464a', 35, 470, 115, 395, 115, 560, 35, 605),
  p(D, 75, 365, 128, 375, 128, 580, 115, 575, 115, 400, 75, 385),
  p(S, 0, 430, 35, 410, 35, 610, 0, 650),
]);

const z11 = mapLayer(580, 560, 3, 3, [
  p(M, 612, 0, 668, 0, 668, 225, 612, 250),
  p(S, 668, 0, 720, 0, 720, 170, 668, 200),
  w(K, 725, 30, 865, 95, 110),
  p(D, 870, 0, 970, 0, 970, 100, 950, 130, 950, 190, 890, 180),
  w(M, 838, 120, 890, 95, 120),
  p(G, 880, 180, 935, 210, 880, 235),
  p(S, 955, 135, 1095, 65, 1095, 130, 955, 220),
  p(M, 970, 50, 1015, 22, 1015, 150, 970, 170),
  w(D, 150, 35, 190, 50, 30),
  w(S, 190, 30, 265, 0, 70),
  w(S, 265, 15, 330, 0, 90),
  w(D, 330, 0, 440, 45, 90),
  w(M, 155, 80, 235, 45, 100),
  w(D, 235, 55, 390, 125, 120),
  w(S, 350, 95, 440, 45, 120),
  p(O, 395, 110, 435, 95, 435, 120, 400, 125),
  w(D, 440, 45, 520, 65, 230),
  p(OD, 458, 95, 500, 110, 500, 260, 458, 240),
  w(S, 520, 65, 615, 15, 215),
  p(D, 120, 80, 320, 165, 240, 240, 240, 430, 120, 245),
  p(GL, 170, 160, 235, 190, 235, 330, 170, 300),
  p(M, 270, 205, 425, 100, 430, 280, 270, 225),
  p(S, 425, 100, 455, 92, 455, 260, 430, 275),
  p(B, 292, 205, 415, 258, 415, 280, 292, 245),
  p(G, 245, 250, 385, 300, 385, 330, 245, 272),
  p(B, 245, 272, 385, 320, 385, 470, 245, 400),
  p(S, 235, 215, 275, 205, 275, 250, 245, 260, 245, 420, 235, 430),
  p(GL, 72, 350, 240, 432, 225, 340, 70, 272),
  w(M, 520, 288, 612, 245, 222),
  p(S, 612, 245, 838, 125, 838, 250, 612, 480),
  p(K, 430, 270, 520, 310, 480, 325, 395, 280),
  p(D, 385, 290, 480, 330, 480, 535, 385, 490),
  p(S, 480, 330, 520, 310, 520, 510, 480, 535),
  p(S, 760, 315, 990, 190, 990, 380, 890, 450, 760, 400),
  w(M, 665, 360, 760, 320, 75),
  p(M, 990, 190, 1035, 165, 1035, 420, 990, 440),
  p(K, 1035, 165, 1185, 235, 1185, 440, 1035, 420),
  p(O, 1105, 180, 1125, 170, 1125, 190),
  p(M, 1120, 115, 1170, 85, 1170, 215, 1120, 200),
  w(S, 1055, 160, 1120, 125, 60),
  w(D, 1170, 105, 1310, 155, 60),
  p(S, 1185, 240, 1300, 165, 1300, 290, 1185, 330),
  p(O, 1232, 255, 1275, 238, 1275, 275, 1240, 280),
  p(S, 1300, 255, 1440, 175, 1440, 240, 1400, 280),
  p(D, 1320, 170, 1390, 200, 1345, 230, 1320, 235),
  w(M, 1245, 290, 1290, 260, 110),
  w(K, 1290, 260, 1440, 335, 130),
  w(S, 1145, 340, 1250, 290, 60),
  p(D, 1145, 345, 1220, 385, 1145, 420),
  w(D, 1220, 380, 1320, 420, 60),
  w(S, 1130, 415, 1220, 380, 60),
  p(O, 1175, 445, 1215, 430, 1215, 460, 1185, 465),
  w(S, 1265, 440, 1360, 410, 60),
  w(M, 900, 460, 1050, 395, 170),
  w(D, 1050, 410, 1205, 480, 80),
  p(OD, 1050, 455, 1095, 470, 1095, 490, 1050, 470),
  p(D, 625, 395, 710, 425, 710, 635, 625, 600),
  p(K, 665, 365, 890, 455, 890, 490, 665, 400),
  p(B, 760, 405, 885, 455, 885, 480, 760, 440),
  p(G, 725, 445, 865, 490, 865, 525, 725, 470),
  p(B, 725, 470, 865, 522, 865, 670, 725, 605),
  p(S, 865, 480, 900, 460, 900, 680, 865, 700),
  p(M, 900, 460, 965, 440, 965, 680, 900, 680),
  p(D, 965, 445, 1145, 525, 1145, 735, 965, 650),
  p('#8a8a8a', 985, 510, 1055, 540, 1055, 680, 985, 650),
  p(OD, 1060, 550, 1110, 575, 1110, 630, 1060, 610),
  p('#85878a', 1055, 625, 1110, 630, 1110, 680, 1055, 680),
  p(M, 1145, 525, 1205, 480, 1205, 700, 1160, 735, 1145, 720),
  p(GL, 890, 710, 1060, 780, 1060, 690, 885, 630),
  p('#8b8d8d', 1060, 780, 1140, 740, 1140, 660, 1060, 690),
  p(D, 1205, 490, 1250, 510, 1250, 725, 1205, 700),
  p(S, 1250, 510, 1415, 415, 1415, 625, 1250, 725),
  w(D, 1360, 400, 1415, 425, 60),
  w(M, 1210, 480, 1260, 460, 30),
]);

const items = [silhouette, ...z7, ...z10, ...z12, ...z11];

const Rails = () => (
  <g fill="none" strokeWidth="1">
    <g stroke="#222">
      <path d="M612 530l50 23" strokeWidth="2" />
      <path d="M612 507v23M629 515v23M645 522v24M662 530v23" />
      <path d="M604 677l56 26" strokeWidth="2" />
      <path d="M604 650v27M622 660v26M640 668v26M660 677v26M598 650v28" />
      <path d="M877 797l57 23 25-13" strokeWidth="2" />
      <path d="M877 770v27M895 777v27M915 785v27M934 793v27M960 780v27" />
      <path d="M1177 775l55 22 13-5" strokeWidth="2" />
      <path d="M1177 748v27M1193 755v27M1209 762v27" />
    </g>
    <g stroke="#ddd" strokeWidth="1.2">
      <path d="M612 505l26-13M612 505l50 20" />
      <path d="M598 650l29-13M600 655l60 25" />
      <path d="M877 770l56 22 27-14" />
      <path d="M1177 748l55 22 14-8" />
      <path d="M1423 504l20 8v25M1423 512l20 8" />
      <path d="M927 522l62 73" stroke="#cfcfcf" />
    </g>
  </g>
);

const Building = () => (
  <FloatSvg $x={334} $y={154} width="960" height="540" viewBox="560 320 960 540">
    <defs>
      <filter id="mott" x="0" y="0" width="100%" height="100%">
        <feTurbulence type="fractalNoise" baseFrequency="0.05" numOctaves="2" seed="4" />
        <feColorMatrix values="0 0 0 0 .55  0 0 0 0 .5  0 0 0 0 .5  .5 0 0 0 -.12" />
        <feComposite in2="SourceGraphic" operator="in" result="n" />
        <feMerge><feMergeNode in="SourceGraphic" /><feMergeNode in="n" /></feMerge>
      </filter>
      <filter id="soft"><feGaussianBlur stdDeviation=".3" /></filter>
    </defs>
    <g filter="url(#soft)">
      {items.map((it, i) => (
        <g key={i}>
          <polygon points={it.pts.join(' ')} fill={it.c} filter={it.c === M ? 'url(#mott)' : undefined} />
          {it.cap && <line x1={it.cap[0]} y1={it.cap[1]} x2={it.cap[2]} y2={it.cap[3]} stroke={capOf(it.c)} strokeWidth="2.2" />}
        </g>
      ))}
      <Rails />
    </g>
  </FloatSvg>
);

const levels = Array.from({ length: 16 }, (_, i) => i + 2);

export default function App() {
  return (
    <Page>
      <Global />
      <TitleBar>
        <RButton>
          <svg width="34" height="34" viewBox="0 0 34 34"><path d="M6 30V4h12c7 0 9 11 1 13l8 13h-7l-7-12h-2v12z" fill="#2a83c9" /><path d="M12 9v5h5c3 0 3-5 0-5z" fill="#5f6d73" /><path d="M25 19l5 0-2.5 3z" fill="#ddd" /></svg>
        </RButton>
        <Qat>
          <QatSlot $w={6} />
          <QatSlot $w={22}><Folder /></QatSlot>
          <QatSlot $w={25}><Q><Floppy /></Q></QatSlot>
          <QatSlot $off><Q><path d="M5 8l11-5 11 5v15l-11 6-11-6z" fill="#ddd" stroke="#555" /><path d="M5 8l11 6 11-6M16 14v15" stroke="#555" fill="none" /></Q></QatSlot>
          <TriDown />
          <QatSlot $off $w={26}><Q><path d="M12 7L4 14l8 7v-4c8 0 12 2 14 7 0-8-5-13-14-13z" fill="#e8e8e8" stroke="#555" /></Q></QatSlot>
          <TriDown />
          <QatSlot $off $w={26}><Q><path d="M20 7l8 7-8 7v-4c-8 0-12 2-14 7 0-8 5-13 14-13z" fill="#e8e8e8" stroke="#555" /></Q></QatSlot>
          <TriDown />
          <QatSep />
          <QatSlot $w={18}><Q><path d="M3 9v14M29 9v14" stroke="#444" fill="none" /><rect x="3" y="13" width="26" height="6" fill="#ccc" stroke="#444" /><path d="M9 13v3M15 13v3M21 13v3" stroke="#444" /></Q></QatSlot>
          <TriDown $m={5} />
          <QatSlot $w={20}><Q><path d="M4 28L28 4M22 4h6v6M4 22v6h6" stroke="#222" strokeWidth="2" fill="none" /></Q></QatSlot>
          <QatSlot $w={26}><Q><circle cx="21" cy="11" r="8" fill="#fff" stroke="#222" /><path d="M15 17L7 26" stroke="#222" strokeWidth="2" /><circle cx="7" cy="27" r="2.5" fill="none" stroke="#222" /><text x="21" y="15" fontSize="11" textAnchor="middle" fill="#111">1</text></Q></QatSlot>
          <QatSlot $w={22}><svg width="20" height="22" viewBox="0 0 20 22"><path d="M1 21L8 2h4l7 19h-4l-1.5-5h-5L7 21zM9 13h3L10.5 8z" fill="#333" fillRule="evenodd" /></svg></QatSlot>
          <QatSep />
          <QatSlot $w={20}><Q><path d="M4 10l12-7 12 7v13l-12 7-12-7z" fill="#e6e6e6" stroke="#333" /><path d="M4 10l12 7 12-7M16 17v13" stroke="#333" fill="none" /></Q></QatSlot>
          <TriDown $m={4} />
          <QatSlot $off $w={22}><Q><circle cx="16" cy="16" r="9" fill="#ddd" stroke="#666" /><path d="M16 2v28" stroke="#666" /></Q></QatSlot>
          <QatSlot $on $w={24}><Q><path d="M4 6h8v8H4zM4 18h8v8H4z" fill="#333" /><path d="M15 8h13M15 13h10M15 20h13M15 25h10" stroke="#124a88" strokeWidth="1.6" /><path d="M24 3L14 29" stroke="#124a88" /></Q></QatSlot>
          <QatSep $m={3} />
          <QatSlot $w={25}><Q><rect x="8" y="3" width="16" height="16" fill="#eee" stroke="#333" /><rect x="4" y="7" width="16" height="18" fill="#f4f4f4" stroke="#333" /><path d="M19 19l9 10M28 19l-9 10" stroke="#c22" strokeWidth="3" /></Q></QatSlot>
          <QatSlot $w={22}><Q><rect x="11" y="3" width="18" height="15" fill="#fff" stroke="#333" /><rect x="3" y="14" width="18" height="15" fill="#fff" stroke="#333" /><rect x="3" y="14" width="18" height="3" fill="#333" /><rect x="11" y="3" width="18" height="3" fill="#333" /></Q></QatSlot>
          <TriDown $m={2} />
          <QatSlot $w={14}><svg width="10" height="10" viewBox="0 0 10 10"><path d="M1 1h8M1 4h8L5 9z" fill="#444" stroke="#444" /></svg></QatSlot>
        </Qat>
        <Title>{'Autodesk Revit 2017 -     T8-标准层.rvt - 三维视图: {三维}'}</Title>
        <InfoCenter>
          <PlayTri />
          <SearchBox>键入关键字或短语</SearchBox>
          <InfoSlot $w={24}><Q><path d="M6 4h7v7h6V4h7l3 20a5 5 0 0 1-10 3v-9h-6v9A5 5 0 0 1 3 24z" fill="#eee" stroke="#333" /></Q></InfoSlot>
          <InfoSlot $w={23}><Q><path d="M6 3c10 0 18 7 20 16L9 22C4 16 3 9 6 3z" fill="#ddd" stroke="#333" /><path d="M14 20l-5 9h14l-5-9" fill="none" stroke="#333" /></Q></InfoSlot>
          <InfoSlot $w={25}><Q><path d="M16 3l4 9 10 1-8 7 3 10-9-6-9 6 3-10-8-7 10-1z" fill="#fff" stroke="#333" /></Q></InfoSlot>
          <InfoSlot $w={24}><Q><circle cx="16" cy="11" r="8" fill="#eee" stroke="#333" /><path d="M4 30c1-8 6-9 12-9s11 1 12 9z" fill="#ddd" stroke="#333" /></Q></InfoSlot>
          <InfoSlot $w={26}>登录</InfoSlot>
          <InfoSlot $w={61} />
          <TriDown $m={0} />
          <InfoSlot $w={32}><svg width="20" height="18" viewBox="0 0 20 18"><path d="M2 1h6l2 4 2-4h6l-5 8 5 8h-6l-2-4-2 4H2l5-8z" fill="#3d6cae" stroke="#1d3f7a" /></svg></InfoSlot>
          <InfoSlot $w={36}><svg width="18" height="18" viewBox="0 0 18 18"><circle cx="9" cy="9" r="8" fill="#f4f4f4" stroke="#3a6ea5" /><text x="9" y="13" fontSize="11" fontWeight="700" textAnchor="middle" fill="#224a88">?</text></svg></InfoSlot>
          <TriDown $m={2} />
        </InfoCenter>
        <WinControls>
          <WinBtn><svg width="12" height="12"><path d="M1 6h10" stroke="#222" /></svg></WinBtn>
          <WinBtn><svg width="12" height="12"><path d="M3 3V1h8v8H9M1 3h8v8H1z" fill="none" stroke="#222" /></svg></WinBtn>
          <WinBtn><svg width="12" height="12"><path d="M1 1l10 10M11 1L1 11" stroke="#222" /></svg></WinBtn>
        </WinControls>
      </TitleBar>

      <Tabs>
        <Tab $mr={20}>视图</Tab>
        <Tab $mr={19}>管理</Tab>
        <Tab $mr={21}>附加模块</Tab>
        <Tab $mr={20}>构件坞</Tab>
        <Tab $mr={22}>Site Designer</Tab>
        <Tab $mr={23}>Ideate Software</Tab>
        <Tab $mr={20}>协同平台</Tab>
        <Tab $mr={31}>修改</Tab>
        <TabToggle><TriUp /></TabToggle>
        <TriDown />
      </Tabs>

      <Ribbon>
        <RibbonLead />
        {ribbon.map((pn, i) => (
          <Panel key={i} $w={pn.w}>
            <PanelBody>
              {pn.b.map(([ic, label, bw, off, caret]) => (
                <RBtn key={ic} $w={bw} $off={off}>
                  <RIcon $off={off}><Ic w={33}>{RI[ic]}</Ic></RIcon>
                  {label.map(l => <RLabel key={l}>{l}</RLabel>)}
                  {caret === 'b' && <BelowCaret />}
                  {caret === 's' && <SideCaret />}
                </RBtn>
              ))}
            </PanelBody>
            <PanelTitle>{pn.t}</PanelTitle>
          </Panel>
        ))}
        <RibbonFill />
      </Ribbon>
      <SubBar />

      <Main>
        <Tree>
          <TreeList>
            {levels.map(n => <TreeRow key={n}>标高 {n}</TreeRow>)}
          </TreeList>
          <VScroll $w={18}><TreeThumb /><SmallChevron>v</SmallChevron></VScroll>
        </Tree>
        <Canvas>
          <CanvasCol>
            <ViewArea>
              <Building />
              <WinSmall>
                <svg width="12" height="8"><rect x="1" y="2" width="10" height="4" fill="#fff" stroke="#555" /></svg>
                <svg width="12" height="12"><path d="M3 3V1h8v8H9M1 3h8v8H1z" fill="#fff" stroke="#555" /><rect x="3.5" y="5.5" width="3" height="3" fill="none" stroke="#555" /></svg>
                <svg width="12" height="12"><path d="M1 1l10 10M11 1L1 11" stroke="#555" strokeWidth="2.4" /><path d="M1 1l10 10M11 1L1 11" stroke="#fff" strokeWidth=".8" /></svg>
              </WinSmall>
              <FloatSvg $x={1514} $y={76} width="140" height="130" viewBox="0 0 140 130">
                <defs><radialGradient id="sh"><stop offset="0" stopColor="#888" /><stop offset="1" stopColor="#fff" stopOpacity="0" /></radialGradient></defs>
                <ellipse cx="71" cy="74" rx="64" ry="37" fill="#f4f4f4" stroke="#bbb" strokeDasharray="2 1" />
                <ellipse cx="71" cy="72" rx="49" ry="26" fill="#fff" stroke="#bbb" strokeDasharray="2 1" />
                <ellipse cx="74" cy="82" rx="46" ry="12" fill="url(#sh)" />
                <path d="M37 24l34-15 35 14v35L74 83 37 64z" fill="#e8e8e8" stroke="#aaa" />
                <path d="M37 24l37 15 32-16-35-14z" fill="#f3f3f3" stroke="#aaa" />
                <path d="M74 39v44" stroke="#aaa" />
                <text x="72" y="28" fontSize="12" fill="#bbb" textAnchor="middle">上</text>
                <text x="55" y="62" fontSize="20" fill="#aaa" textAnchor="middle" transform="skewY(18) translate(0,-18)">前</text>
                <text x="90" y="60" fontSize="20" fill="#aaa" textAnchor="middle" transform="skewY(-18) translate(0,30)">右</text>
                <text x="25" y="51" fontSize="9" fill="#aaa">北</text>
                <text x="108" y="48" fontSize="9" fill="#aaa">东</text>
                <text x="18" y="92" fontSize="11" fill="#aaa">西</text>
                <text x="108" y="88" fontSize="11" fill="#aaa">南</text>
              </FloatSvg>
              <NavBar>
                <svg width="30" height="112" viewBox="0 0 30 112">
                  <circle cx="25" cy="5" r="3" fill="#ccc" stroke="#999" />
                  <circle cx="15" cy="29" r="10" fill="#ddd" stroke="#888" />
                  <circle cx="15" cy="29" r="6" fill="#eee" stroke="#999" />
                  <path d="M13 49h4l-2 3z" fill="#888" />
                  <path d="M3 55h24" stroke="#bbb" />
                  <rect x="9" y="65" width="10" height="10" fill="#a8cda0" stroke="#8a8" />
                  <circle cx="20" cy="75" r="3.5" fill="#eee" stroke="#666" />
                  <path d="M13 89h4l-2 3z" fill="#888" />
                  <circle cx="25" cy="107" r="3" fill="#ccc" stroke="#999" />
                </svg>
              </NavBar>
              <SpeedBall>
                <svg width="66" height="66" viewBox="0 0 66 66">
                  <circle cx="33" cy="33" r="32" fill="#fff" stroke="#e8e8e8" />
                  <circle cx="33" cy="33" r="28" fill="#fff" stroke="#4ec07a" strokeWidth="1.2" />
                  <path d="M33 5a28 28 0 0 1 14 4" fill="none" stroke="#5ad27f" strokeWidth="3" />
                </svg>
                <SpeedText>
                  <SpeedNum>8<span>%</span></SpeedNum>
                  <SpeedRate><i>↓</i>6.8K/s</SpeedRate>
                </SpeedText>
              </SpeedBall>
              <Watermark>知乎 @凉拌谢耳朵</Watermark>
            </ViewArea>
            <ViewBar>
              <ScaleText>{'1  :  100'}</ScaleText>
              <ViewIcons>{viewIcons.map((c, i) => <ViewMini key={i} c={c} />)}</ViewIcons>
              <SmallChevron $ml={8}>‹</SmallChevron>
              <HThumb />
              <HChevronEnd>›</HChevronEnd>
            </ViewBar>
          </CanvasCol>
          <RightScrollCol>
            <RightThumb />
            <TopChevron>^</TopChevron>
            <BottomChevron>v</BottomChevron>
          </RightScrollCol>
        </Canvas>
      </Main>

      <Status>
        <Message>单击可进行选择; 按 Tab 键并单击可选择其他项目; 按 Ctrl 键并单击可将新项目添加到选择集; 按 Shift 键并单击可取消选择。</Message>
        <StatusIcons $ml={0}><Ic w={18} vb="0 0 18 18"><circle cx="9" cy="5" r="3" fill="#999" /><path d="M4 17V10h10v7z" fill="#aaa" /></Ic></StatusIcons>
        <StatusIcons $ml={3}><StatusBox $w={204}><span /><VTick>v</VTick></StatusBox></StatusIcons>
        <StatusIcons $ml={9} $g={2}><Ic w={14} vb="0 0 18 18"><path d="M4 2h10l-5 8v6l-2-2v-4z" fill="#aaa" stroke="#666" /></Ic><StatusNum>:0</StatusNum></StatusIcons>
        <StatusIcons $ml={29} $g={5}>
          <Ic w={18} vb="0 0 18 18"><rect x="3" y="2" width="12" height="14" fill="#eee" stroke="#333" /><path d="M5 6h8M5 9h8M5 12h8" stroke="#333" /></Ic>
          <Ic w={16} vb="0 0 18 18"><rect x="3" y="2" width="12" height="14" fill="#999" /></Ic>
        </StatusIcons>
        <StatusIcons $ml={9}><StatusBox $w={157}><span>主模型</span><VTick>v</VTick></StatusBox></StatusIcons>
        <StatusIcons $ml={163} $g={6}>
          {statusIcons.map((c, i) => <Ic key={i} w={20} vb="0 0 18 18">{c}</Ic>)}
          <Ic w={16} vb="0 0 18 18"><path d="M2 2h14l-6 8v7l-2-2v-5z" fill="#ccc" stroke="#777" /></Ic>
        </StatusIcons>
        <StatusNum>:0</StatusNum>
      </Status>
      <TaskStrip />

      <Menu>
        <MenuLeft>
          <RecentBtns>
            <RecentBtn><Ic w={16}><path d="M10 3h12l5 5v15H10z" fill="#eee" stroke="#555" /><circle cx="11" cy="21" r="7" fill="#eee" stroke="#555" /><path d="M11 16v5h4" stroke="#555" fill="none" /></Ic></RecentBtn>
            <RecentBtn><Ic w={16}><path d="M3 26V6h9l3 3h11v5" fill="#eee" stroke="#555" /><path d="M3 26l5-11h22l-5 11z" fill="#ccc" stroke="#555" /></Ic></RecentBtn>
          </RecentBtns>
          {menuItems.map(([label, icon, arrow]) => (
            <MenuItem key={label}><MenuIcon>{icon}</MenuIcon><MenuLabel>{label}</MenuLabel>{arrow && <MenuArrow />}</MenuItem>
          ))}
          <MenuItem $sel>
            <MenuIcon><Ic w={32}><Doc /><Arr x={12} y={16} /></Ic></MenuIcon>
            <MenuLabel>导出</MenuLabel>
            <MenuArrow $l={119} />
          </MenuItem>
          <MenuItem $h={81}>
            <MenuIcon><svg width="32" height="16" viewBox="0 0 32 16"><path d="M1 1h9l5 7-5 7H1l5-7z" fill="#eee" stroke="#456" /><path d="M10 1h7l5 7-5 7h-7l5-7z" fill="#9cc6ec" stroke="#246" /><path d="M18 1h8l5 7-5 7h-8l5-7z" fill="#2f8fe0" stroke="#246" /></svg></MenuIcon>
            <MenuLabel>Suite 工作流</MenuLabel>
            <MenuArrow />
          </MenuItem>
          {menuItems2.map(([label, icon]) => (
            <MenuItem key={label}><MenuIcon>{icon}</MenuIcon><MenuLabel>{label}</MenuLabel><MenuArrow /></MenuItem>
          ))}
          <MenuRule />
          <MenuItem>
            <MenuIcon><Ic w={32}><path d="M4 3h16l7 7v14H4z" fill="#eef1f4" stroke="#666" /><rect x="18" y="19" width="13" height="12" rx="1" fill="#b83a3a" stroke="#7a1f1f" /><path d="M21 22l7 6M28 22l-7 6" stroke="#fff" strokeWidth="1.4" /></Ic></MenuIcon>
            <MenuLabel>关闭</MenuLabel>
          </MenuItem>
        </MenuLeft>
        <MenuRight>
          <ExportPanel>
            <ExportHead>创建交换文件并设置选项。</ExportHead>
            {exportsA.map(([n, d, ic, ar]) => (
              <ExportRow key={n}><ExportIcon>{ic}</ExportIcon><ExportText><ExportName>{n}</ExportName><ExportDesc>{d}</ExportDesc></ExportText>{ar && <ExportArrow />}</ExportRow>
            ))}
            <ExportRow $h={70} $off>
              <ExportIcon $off><Ic w={32}><g fill="#ddd" stroke="#888"><rect x="1" y="3" width="13" height="14" /><rect x="15" y="3" width="10" height="14" /><rect x="1" y="18" width="13" height="10" /><rect x="15" y="18" width="7" height="6" /><rect x="23" y="18" width="7" height="6" /><rect x="15" y="25" width="7" height="6" /><rect x="23" y="25" width="7" height="6" /></g></Ic></ExportIcon>
              <ExportText $w={190}><ExportName $off>族类型</ExportName><ExportDesc>将族类型从当前族导出到文本(.txt)文件。</ExportDesc></ExportText>
            </ExportRow>
            {exportsB.map(([n, d, ic]) => (
              <ExportRow key={n}><ExportIcon>{ic}</ExportIcon><ExportText><ExportName>{n}</ExportName><ExportDesc>{d}</ExportDesc></ExportText></ExportRow>
            ))}
            <ExportRow $sel>
              <ExportIcon><Ic w={32}><defs><linearGradient id="db" x1="0" x2="1"><stop offset="0" stopColor="#aaa" /><stop offset=".5" stopColor="#f5f5f5" /><stop offset="1" stopColor="#888" /></linearGradient></defs><path d="M4 6v20c0 5 24 5 24 0V6z" fill="url(#db)" stroke="#555" /><ellipse cx="16" cy="6" rx="12" ry="4" fill="#eee" stroke="#555" /><path d="M4 16c0 5 24 5 24 0" fill="none" stroke="#888" /></Ic></ExportIcon>
              <ExportText><ExportName>ODBC 数据库</ExportName><ExportDesc $dark>将模型数据保存到 ODBC 数据库。</ExportDesc></ExportText>
            </ExportRow>
            {exportsC.map(([n, d, ic, ar]) => (
              <ExportRow key={n}><ExportIcon>{ic}</ExportIcon><ExportText><ExportName>{n}</ExportName><ExportDesc>{d}</ExportDesc></ExportText>{ar && <ExportArrow />}</ExportRow>
            ))}
            <ScrollBand><TriDown /></ScrollBand>
          </ExportPanel>
          <MenuFooter>
            <FootBtn $w={32}>选项</FootBtn>
            <FootBtn $w={61}>退出 Revit</FootBtn>
          </MenuFooter>
        </MenuRight>
      </Menu>
      <Arrow $x={48} $y={212} width="20" height="86" viewBox="0 0 20 86"><path d="M8 0h4l1 60 7 0-10 26L0 60h7z" fill="#f22a1e" /></Arrow>
      <Arrow $x={304} $y={396} width="20" height="68" viewBox="0 0 20 68"><path d="M8 0h4l1 46 7 0-10 22L0 46h7z" fill="#f22a1e" /></Arrow>

      <SogouLogo width="30" height="30" viewBox="0 0 30 30"><rect x="2" y="3" width="25" height="24" rx="3" fill="#e8522a" transform="rotate(-14 15 15)" /><path d="M21 9H11c-3 0-3 5 0 5h7c3 0 3 6 0 6H8" fill="none" stroke="#fff" strokeWidth="3.2" /></SogouLogo>
      <Sogou>
        <SogouSlot>英</SogouSlot>
        <SogouSlot><svg width="14" height="14" viewBox="0 0 14 14"><path d="M9 0a7 7 0 1 1-9 10c5 1 10-3 9-10z" fill="#1a6fb5" /></svg></SogouSlot>
        <SogouSlot><svg width="12" height="12" viewBox="0 0 12 12"><circle cx="3" cy="3" r="1.6" fill="#1a6fb5" /><path d="M8 5c3 0 2 4-1 6" stroke="#1a6fb5" strokeWidth="1.5" fill="none" /></svg></SogouSlot>
        <SogouSlot><svg width="16" height="16" viewBox="0 0 16 16"><circle cx="8" cy="8" r="7" fill="none" stroke="#1a6fb5" strokeWidth="1.4" /><path d="M6 5v2M10 5v2M4.5 10c2 2.5 5 2.5 7 0" stroke="#1a6fb5" fill="none" strokeWidth="1.2" /></svg></SogouSlot>
        <SogouSlot><svg width="14" height="16" viewBox="0 0 14 16"><rect x="4" y="0" width="6" height="10" rx="3" fill="#1a6fb5" /><path d="M2 7c0 6 10 6 10 0M7 12v3M4 15h6" stroke="#1a6fb5" fill="none" /></svg></SogouSlot>
        <SogouSlot><svg width="16" height="12" viewBox="0 0 16 12"><rect width="16" height="12" rx="2" fill="#1a6fb5" /><path d="M2 3h12M2 6h12M4 9h8" stroke="#fff" strokeDasharray="1.5 1" /></svg></SogouSlot>
        <SogouSlot><svg width="14" height="14" viewBox="0 0 14 14"><circle cx="6" cy="4" r="3" fill="#b5bec8" /><path d="M1 14c0-5 3-6 5-6s5 1 5 6z" fill="#b5bec8" /></svg></SogouSlot>
        <SogouSlot><svg width="14" height="13" viewBox="0 0 14 13"><path d="M4 0h6l4 3-2 3-1-1v8H3V5L2 6 0 3z" fill="#1a6fb5" /></svg></SogouSlot>
        <SogouSlot><svg width="13" height="13" viewBox="0 0 13 13"><g fill="#1a6fb5"><rect width="6" height="6" /><rect x="7" width="6" height="6" /><rect y="7" width="6" height="6" /><rect x="7" y="7" width="6" height="6" /></g></svg></SogouSlot>
      </Sogou>
      <Cursor width="12" height="18" viewBox="0 0 12 18"><path d="M1 1v13l3-3 2 5 2-1-2-5h4z" fill="#fff" stroke="#222" strokeWidth=".8" /></Cursor>
    </Page>
  );
}
